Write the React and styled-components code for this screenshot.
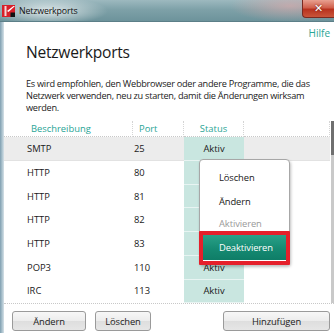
import React from "react";
import styled, { createGlobalStyle } from "styled-components";

const Global = createGlobalStyle`
  html, body { margin: 0; padding: 0; }
  body { width: 334px; height: 333px; overflow: hidden; background: #fff;
    font-family: "Open Sans", "Noto Sans", sans-serif; }
`;

const Window = styled.div`
  position: relative;
  width: 334px;
  height: 333px;
  display: flex;
  flex-direction: column;
  overflow: hidden;
`;

const TitleBar = styled.div`
  height: 21px;
  flex: none;
  display: flex;
  align-items: center;
  background:
    radial-gradient(ellipse 60px 14px at 48px 11px, rgba(255,255,255,0.75), rgba(255,255,255,0) 100%),
    radial-gradient(ellipse 60px 16px at 290px 6px, rgba(230,170,170,0.6), rgba(230,170,170,0) 100%),
    linear-gradient(180deg, #9db9bf 0%, #7ea1a8 45%, #6d939b 100%);
  border-bottom: 1px solid #5c7f88;
`;

const TitleIcon = styled.svg`
  width: 14px;
  height: 14px;
  margin: 0 3px 0 2px;
  flex: none;
`;

const TitleText = styled.span`
  font-size: 8.8px;
  color: #111;
  letter-spacing: -0.15px;
`;

const CloseButton = styled.div`
  margin-left: auto;
  align-self: flex-start;
  width: 31px;
  height: 17px;
  border-bottom-left-radius: 4px;
  border: 1px solid #7a2a20;
  border-top: none;
  border-right: none;
  background: linear-gradient(180deg, #e8a090 0%, #d0604c 45%, #b8321e 55%, #c9553a 100%);
  display: flex;
  align-items: center;
  justify-content: center;
  color: #fff;
  font-family: "DejaVu Sans", sans-serif;
  font-weight: bold;
  font-size: 11px;
  text-shadow: 0 0 2px #5a1008;
`;

const Frame = styled.div`
  flex: 1;
  display: flex;
  min-height: 0;
`;

const LeftEdge = styled.div`
  width: 4px;
  flex: none;
  background: linear-gradient(90deg, #7f9fb0 0%, #a9c0cc 50%, #d7e2e8 100%);
`;

const Content = styled.div`
  flex: 1;
  display: flex;
  flex-direction: column;
  min-width: 0;
`;

const HelpLink = styled.a`
  align-self: flex-end;
  margin: 5px 4px 0 0;
  font-size: 10px;
  color: #2aa596;
  text-decoration: none;
  line-height: 12px;
`;

const Heading = styled.h1`
  margin: 3px 0 0 22px;
  font-size: 15.6px;
  font-weight: 400;
  color: #1a1a1a;
  line-height: 20px;
  letter-spacing: -0.25px;
`;

const Intro = styled.p`
  margin: 16px 0 0 22px;
  width: 292px;
  font-size: 9.2px;
  line-height: 11.8px;
  color: #222;
  letter-spacing: -0.28px;
`;

const TableArea = styled.div`
  margin-top: 8px;
  display: flex;
`;

const Table = styled.div`
  flex: 1;
  display: grid;
  grid-template-columns: 129px 51px 60px 1fr;
  grid-auto-rows: 23.7px;
  grid-template-rows: 16px;
  font-size: 9.4px;
  color: #1a1a1a;
`;

const HeadCell = styled.div`
  display: flex;
  align-items: center;
  justify-content: ${(p) => (p.$center ? "center" : "flex-start")};
  padding-left: ${(p) => p.$pad || 0}px;
  color: #2aa596;
  border-bottom: 1px dotted #c8c8c8;
  border-right: 1px dotted #d4d4d4;
`;

const Cell = styled.div`
  display: flex;
  align-items: center;
  justify-content: ${(p) => (p.$center ? "center" : "flex-start")};
  padding-left: ${(p) => p.$pad || 0}px;
  background: ${(p) =>
    p.$status ? "#c9e6e0" : p.$selected ? "#ececec" : "transparent"};
  border-bottom: 1px solid ${(p) => (p.$status ? "#e8f4f2" : p.$selected ? "#e2e2e2" : "transparent")};
`;

const ScrollTrack = styled.div`
  width: 3px;
  flex: none;
  margin: 0 0 0 1px;
  background: linear-gradient(180deg, #6f6f6f 0, #6f6f6f 34px, #c9c9c9 34px);
`;

const Footer = styled.div`
  margin-top: auto;
  border-top: 1px dotted #c8c8c8;
  padding: 7px 4px 2px 8px;
  display: flex;
  gap: 9px;
`;

const Button = styled.button`
  height: 20px;
  width: ${(p) => p.$w}px;
  margin-left: ${(p) => (p.$push ? "auto" : "0")};
  border: 1px solid #9a9a9a;
  border-radius: 3px;
  background: linear-gradient(180deg, #f7f7f7 0%, #ececec 50%, #dedede 51%, #e6e6e6 100%);
  font-family: inherit;
  font-size: 9.4px;
  color: #222;
  padding: 0;
  letter-spacing: -0.1px;
`;

const Menu = styled.div`
  position: absolute;
  left: 199px;
  top: 159px;
  width: 91px;
  box-sizing: border-box;
  border: 1px solid #a7a7a7;
  border-radius: 4px;
  background: #fff;
  box-shadow: 1px 2px 3px rgba(0, 0, 0, 0.25);
  display: flex;
  flex-direction: column;
  padding-top: 5px;
  font-size: 9.4px;
`;

const MenuItem = styled.div`
  height: ${(p) => p.$h || 24}px;
  display: flex;
  align-items: center;
  padding-left: 19px;
  color: ${(p) => (p.$disabled ? "#9a9a9a" : "#1a1a1a")};
  letter-spacing: -0.1px;
`;

const Highlight = styled.div`
  margin: -2px -1px -1px;
  border: 4px solid #e5202b;
  border-radius: 1px;
  display: flex;
`;

const ActiveItem = styled.div`
  flex: 1;
  height: 25px;
  display: flex;
  align-items: center;
  padding-left: 16px;
  color: #fff;
  background: linear-gradient(180deg, #2aa189 0%, #158a72 55%, #0f7d67 100%);
  border-bottom: 1px solid #ffffff;
  letter-spacing: -0.1px;
`;

const rows = [
  ["SMTP", "25"],
  ["HTTP", "80"],
  ["HTTP", "81"],
  ["HTTP", "82"],
  ["HTTP", "83"],
  ["POP3", "110"],
  ["IRC", "113"],
];

export default function App() {
  return (
    <>
      <Global />
      <Window>
        <TitleBar>
          <TitleIcon viewBox="0 0 14 14">
            <path d="M0 1 L13 1 L13 13 L0 13 Z" fill="#d8202a" />
            <path d="M2.5 2 L4.5 2 L4.5 12 L2.5 12 Z" fill="#f4d6d6" />
            <path d="M11.5 2 L13 2 L6.5 8 L5 7 Z" fill="#ffffff" />
            <path d="M8.5 8.5 L13 8.5 L13 13 L8.5 13 Z" fill="#111" />
          </TitleIcon>
          <TitleText>Netzwerkports</TitleText>
          <CloseButton>✕</CloseButton>
        </TitleBar>
        <Frame>
          <LeftEdge />
          <Content>
            <HelpLink href="#">Hilfe</HelpLink>
            <Heading>Netzwerkports</Heading>
            <Intro>
              Es wird empfohlen, den Webbrowser oder andere Programme, die das
              Netzwerk verwenden, neu zu starten, damit die Änderungen wirksam
              werden.
            </Intro>
            <TableArea>
              <Table>
                <HeadCell $pad={27}>Beschreibung</HeadCell>
                <HeadCell $pad={6}>Port</HeadCell>
                <HeadCell $center>Status</HeadCell>
                <HeadCell />
                {rows.map(([name, port], i) => (
                  <React.Fragment key={i}>
                    <Cell $pad={23} $selected={i === 0}>{name}</Cell>
                    <Cell $pad={1} $selected={i === 0}>{port}</Cell>
                    <Cell $center $status>Aktiv</Cell>
                    <Cell $selected={i === 0} />
                  </React.Fragment>
                ))}
              </Table>
              <ScrollTrack />
            </TableArea>
            <Footer>
              <Button $w={74}>Ändern</Button>
              <Button $w={56}>Löschen</Button>
              <Button $w={107} $push>Hinzufügen</Button>
            </Footer>
          </Content>
        </Frame>
        <Menu>
          <MenuItem>Löschen</MenuItem>
          <MenuItem>Ändern</MenuItem>
          <MenuItem $h={20} $disabled>Aktivieren</MenuItem>
          <Highlight>
            <ActiveItem>Deaktivieren</ActiveItem>
          </Highlight>
        </Menu>
      </Window>
    </>
  );
}
